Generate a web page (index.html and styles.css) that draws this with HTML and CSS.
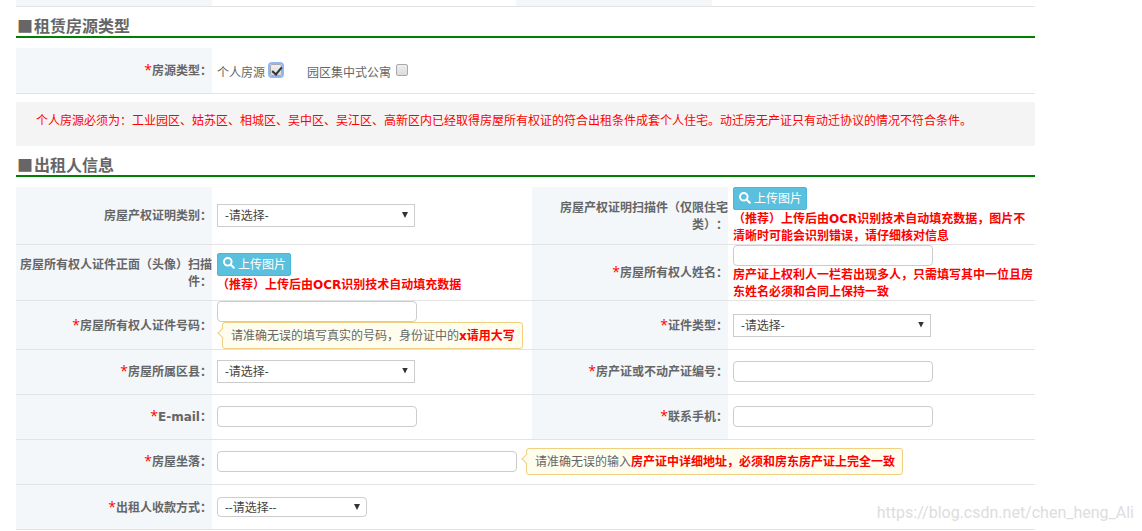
FILE: index.html
```html
<!DOCTYPE html>
<html lang="zh-CN">
<head>
<meta charset="utf-8">
<title>出租人信息</title>
<link rel="stylesheet" href="styles.css">
</head>
<body>
<form class="page">
  <div class="row row-strip"><div class="label"></div><div class="value"></div><div class="label"></div><div class="value"></div></div>

  <h2 class="title"><span class="mark">■</span>租赁房源类型</h2>
  <div class="row row-wide row-type">
    <div class="label"><span><i class="req">*</i>房源类型：</span></div>
    <div class="value checks">
      <label class="check">个人房源<input type="checkbox" class="box focused" checked></label>
      <label class="check">园区集中式公寓<input type="checkbox" class="box"></label>
    </div>
  </div>
  <p class="notice">个人房源必须为：工业园区、姑苏区、相城区、吴中区、吴江区、高新区内已经取得房屋所有权证的符合出租条件成套个人住宅。动迁房无产证只有动迁协议的情况不符合条件。</p>

  <h2 class="title"><span class="mark">■</span>出租人信息</h2>
  <div class="row">
    <label class="label" for="cert-kind"><span>房屋产权证明类别：</span></label>
    <div class="value"><span class="pick"><select id="cert-kind" class="select"><option>-请选择-</option></select></span></div>
    <div class="label"><span>房屋产权证明扫描件（仅限住宅类）：</span></div>
    <div class="value stack">
      <button type="button" class="upload"><svg class="icon" viewBox="0 0 12 12"><circle cx="4.8" cy="4.8" r="3.8"/><path d="M7.8 7.8 10.8 10.8"/></svg>上传图片</button>
      <p class="note">（推荐）上传后由<span class="latin">OCR</span>识别技术自动填充数据，图片不清晰时可能会识别错误，请仔细核对信息</p>
    </div>
  </div>
  <div class="row">
    <div class="label"><span>房屋所有权人证件正面（头像）扫描件：</span></div>
    <div class="value stack">
      <button type="button" class="upload"><svg class="icon" viewBox="0 0 12 12"><circle cx="4.8" cy="4.8" r="3.8"/><path d="M7.8 7.8 10.8 10.8"/></svg>上传图片</button>
      <p class="note">（推荐）上传后由<span class="latin">OCR</span>识别技术自动填充数据</p>
    </div>
    <label class="label" for="owner"><span><i class="req">*</i>房屋所有权人姓名：</span></label>
    <div class="value stack">
      <input id="owner" class="text" type="text">
      <p class="note">房产证上权利人一栏若出现多人，只需填写其中一位且房东姓名必须和合同上保持一致</p>
    </div>
  </div>
  <div class="row">
    <label class="label" for="id-no"><span><i class="req">*</i>房屋所有权人证件号码：</span></label>
    <div class="value stack">
      <input id="id-no" class="text" type="text">
      <div class="tip tip-below">请准确无误的填写真实的号码，身份证中的<b><span class="latin">x</span>请用大写</b></div>
    </div>
    <label class="label" for="id-kind"><span><i class="req">*</i>证件类型：</span></label>
    <div class="value"><span class="pick"><select id="id-kind" class="select"><option>-请选择-</option></select></span></div>
  </div>
  <div class="row row-single">
    <label class="label" for="district"><span><i class="req">*</i>房屋所属区县：</span></label>
    <div class="value"><span class="pick"><select id="district" class="select"><option>-请选择-</option></select></span></div>
    <label class="label" for="cert-no"><span><i class="req">*</i>房产证或不动产证编号：</span></label>
    <div class="value"><input id="cert-no" class="text" type="text"></div>
  </div>
  <div class="row row-single">
    <label class="label" for="email"><span><i class="req">*</i><span class="latin">E-mail</span>：</span></label>
    <div class="value"><input id="email" class="text" type="text"></div>
    <label class="label" for="phone"><span><i class="req">*</i>联系手机：</span></label>
    <div class="value"><input id="phone" class="text" type="text"></div>
  </div>
  <div class="row row-wide row-single">
    <label class="label" for="address"><span><i class="req">*</i>房屋坐落：</span></label>
    <div class="value beside">
      <input id="address" class="text text-long" type="text">
      <div class="tip">请准确无误的输入<b>房产证中详细地址，必须和房东房产证上完全一致</b></div>
    </div>
  </div>
  <div class="row row-wide">
    <label class="label" for="pay"><span><i class="req">*</i>出租人收款方式：</span></label>
    <div class="value"><span class="pick pick-round"><select id="pay" class="select"><option>--请选择--</option></select></span></div>
  </div>
</form>
<div class="watermark">https://blog.csdn.net/chen_heng_Ali</div>
</body>
</html>
```
FILE: styles.css
```css
* { box-sizing: border-box; }

body {
  margin: 0;
  background: #fff;
  color: #666;
  font: 12px/17px "Open Sans", "Noto Sans CJK SC", sans-serif;
  text-spacing-trim: space-all;
}

input, select, button { margin: 0; font: inherit; color: inherit; }

.latin { font-family: "DejaVu Sans", sans-serif; line-height: 1; }

.page { margin: 0 107px 0 16px; }

.title {
  margin: 0 0 10px;
  padding: 8px 0 0 1px;
  border-bottom: 2px solid #008000;
  font: bold 16px/21px "Noto Sans CJK SC", sans-serif;
}
.mark { margin-right: 1px; }

.row {
  display: grid;
  grid-template-columns: 196px minmax(0, 320fr) 196px minmax(0, 307fr);
  min-height: 45px;
  border-bottom: 1px solid #e3e3e3;
}
.row-wide { grid-template-columns: 196px minmax(0, 1fr); }
.row-strip {
  grid-template-columns: 196px minmax(0, 304fr) 196px minmax(0, 323fr);
  min-height: 7px;
}
.row-type { min-height: 46px; }

.label {
  display: flex;
  align-items: center;
  justify-content: flex-end;
  background: #f3f7fa;
  font-weight: bold;
  text-align: right;
}
.req { color: #f00; font: 14px/1 "Open Sans", sans-serif; }

.value { display: flex; align-items: center; padding-left: 5px; }
.stack { flex-direction: column; align-items: flex-start; justify-content: center; }
.beside { gap: 9px; }
.row-single .label, .row-single .value { padding-bottom: 2px; }

.checks { gap: 25px; }
.check { display: flex; align-items: center; gap: 5px; padding-top: 3px; }
.box {
  appearance: none;
  width: 12px;
  height: 12px;
  margin: 0 0 4px;
  border: 1px solid #a9a9a9;
  border-radius: 2px;
  background: linear-gradient(#eee, #dcdcdc);
}
.focused { box-shadow: 0 0 0 2px #8fb8f3; }
.box:checked::after {
  content: "";
  display: block;
  width: 4px;
  height: 8px;
  margin: 0 0 0 3px;
  border: solid #333;
  border-width: 0 2px 2px 0;
  transform: rotate(40deg);
}

.notice {
  min-height: 44px;
  margin: 8px 0 0;
  padding: 10px 20px;
  background: #f4f4f4;
  color: #f00;
}

.text {
  width: 200px;
  height: 21px;
  padding: 0 6px;
  border: 1px solid #ccc;
  border-radius: 4px;
  background: #fff;
}
.text-long { width: 300px; }

.pick { position: relative; display: flex; width: 198px; height: 23px; color: #444; }
.pick::after {
  content: "";
  position: absolute;
  top: 8px;
  right: 7px;
  width: 6px;
  height: 6px;
  background: #333;
  clip-path: polygon(0 0, 100% 0, 50% 100%);
  pointer-events: none;
}
.select {
  appearance: none;
  width: 100%;
  padding: 0 7px;
  border: 1px solid #ccc;
  border-radius: 0;
  background: #fff;
}
.pick-round { width: 150px; height: 20px; }
.pick-round::after { top: 7px; }
.pick-round .select { border-radius: 4px; }

.upload {
  display: flex;
  align-items: center;
  gap: 3px;
  height: 23px;
  padding: 0 4px 0 5px;
  border: 1px solid #46b8da;
  border-radius: 2px;
  background: #5bc0de;
  color: #fff;
}
.icon { width: 12px; height: 12px; margin-bottom: 2px; fill: none; stroke: #fff; stroke-width: 2; stroke-linecap: round; }

.note { margin: 0; color: #f00; font-weight: bold; }

.tip {
  position: relative;
  height: 27px;
  padding: 0 7px 0 8px;
  border: 1px solid #f0d080;
  border-radius: 3px;
  background: #fffdee;
  line-height: 25px;
  white-space: nowrap;
}
.tip b { color: #f00; }
.tip::before {
  content: "";
  position: absolute;
  top: 6px;
  left: -4px;
  width: 7px;
  height: 7px;
  border: solid #f0d080;
  border-width: 0 0 1px 1px;
  background: #fffdee;
  transform: rotate(45deg);
}
.tip-below { margin-left: 5px; }

.watermark {
  position: absolute;
  right: 8px;
  bottom: 8px;
  color: #ddd;
  font: 16px/20px Roboto, sans-serif;
}
```
